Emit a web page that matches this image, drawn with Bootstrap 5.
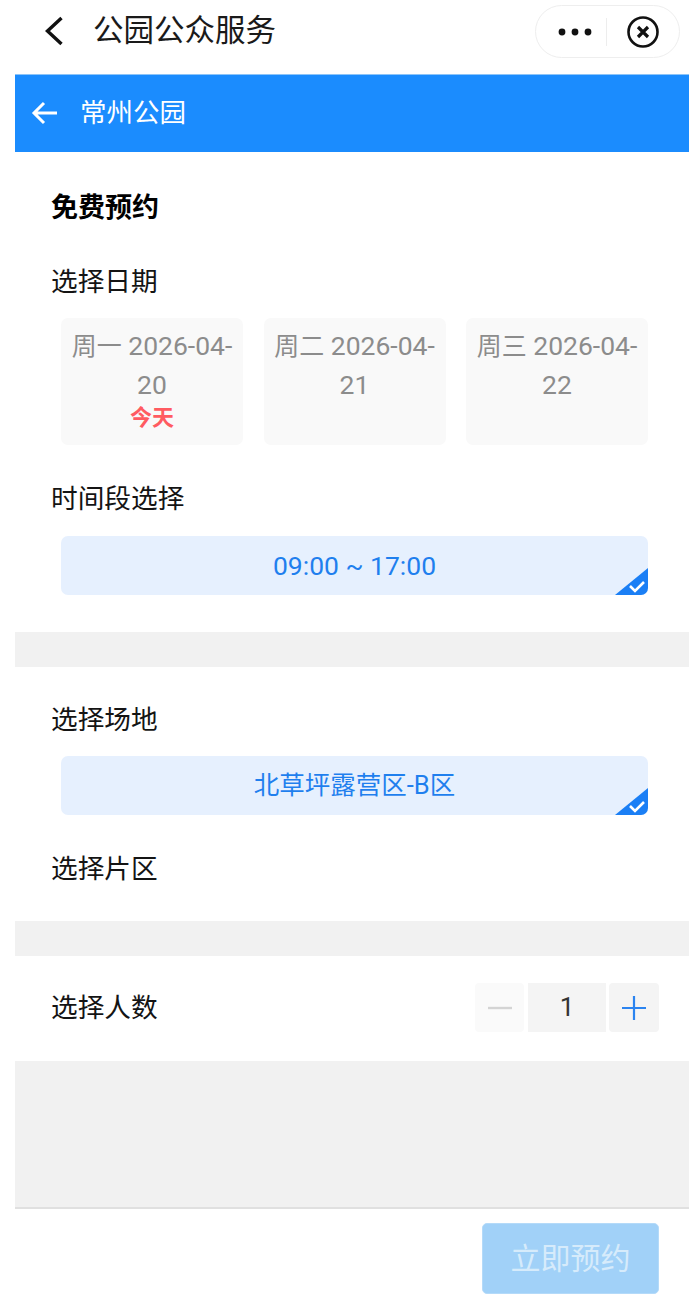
<!DOCTYPE html>
<html lang="zh-CN">
<head>
  <meta charset="UTF-8" />
  <meta name="viewport" content="width=device-width, initial-scale=1.0"/>
  <title>公园公众服务</title>
  <link href="https://cdn.jsdelivr.net/npm/bootstrap@5.3.2/dist/css/bootstrap.min.css" rel="stylesheet">
  <style>
    html, body { height: 1310px; overflow: hidden; }
    body { font-family: Roboto, "Noto Sans CJK SC", sans-serif; color: #111; background: #fff; }
    .wx-bar { height: 74px; }
    .wx-left { height: 62px; }
    .wx-back { width: 93px; padding-left: 44px; }
    .wx-title { font-size: 30.5px; line-height: 1; color: #1a1a1a; }
    .wx-capsule { width: 145px; height: 53px; margin: 5px 9px 0 0; border: 1px solid #eeeeee; border-radius: 27px; padding-left: 22px; }
    .wx-sep { width: 1px; height: 28px; background: #ededed; margin-left: 14px; }
    .wx-close { margin-left: 20px; }
    .page-main { margin-left: 15px; height: 1236px; }
    .top-head { height: 78px; background: #1b8cfe; color: #fff; padding-left: 16px; border-top: 1px solid #8cc4f8; }
    .top-head span { font-size: 26.5px; margin-left: 22px; line-height: 1; }
    .top-head svg { margin-top: -2px; }
    .form-part { padding: 0 41px 0 36px; }
    .part-title { font-size: 27px; font-weight: 700; line-height: 38px; color: #000; padding-top: 37px; }
    .field-label { font-size: 26.7px; line-height: 38px; color: #141414; }
    .label-date { margin-top: 36px; }
    .label-time { margin-top: 35px; }
    .label-place { margin-top: 34px; }
    .label-area { margin-top: 35px; }
    .pick-row { padding-left: 10px; margin-top: 18px; }
    .pick-row.day-row { gap: 20.5px; margin-top: 17px; }
    .pick-row.place-row { margin-top: 17px; }
    .day-item { flex: 1 1 0; height: 127px; background: #f9f9f9; border-radius: 7px; color: #8c8c8c; font-size: 26.5px; line-height: 37.5px; text-align: center; padding: 9px 9px 0; }
    .day-week { font-size: 25px; }
    .day-today { color: #ff5b61; font-size: 22px; font-weight: 700; line-height: 28px; margin-top: 1px; }
    .pick-on { height: 59px; background: #e6f0fe; border-radius: 7px; color: #1f7fee; font-size: 26.5px; overflow: hidden; }
    .pick-text-cjk { font-size: 25.5px; }
    .pick-corner { position: absolute; right: 0; bottom: 0; }
    .gap-band { height: 35px; background: #f1f1f1; }
    .band-one { margin-top: 37px; }
    .band-two { margin-top: 33px; }
    .count-row { height: 105px; padding: 0 30px 2px 36px; }
    .step-btn { width: 49px; height: 49px; border-radius: 4px; }
    .step-minus { background: #fafafa; }
    .step-plus { width: 50px; background: #f4f4f4; margin-left: 3px; }
    .step-num { width: 78px; height: 49px; background: #f4f4f4; margin-left: 4px; font-size: 26px; color: #333; }
    .fill-band { height: 146px; background: #f1f1f1; }
    .foot-bar { border-top: 2px solid #e0e0e0; height: 100px; padding: 14px 30px 0 0; }
    .submit-btn { width: 177px; height: 71px; border-radius: 5px; background: #a1d1f8; color: #d6ebfb; font-size: 30px; border: 1px solid #b4daf9; }
  </style>
</head>
<body>
  <!-- mini program title bar -->
  <div class="wx-bar d-flex align-items-start justify-content-between">
    <div class="wx-left d-flex align-items-center">
      <div class="wx-back d-flex">
        <svg width="20" height="30" viewBox="0 0 20 30"><path d="M17.5 2 L3.5 15 L17.5 28" fill="none" stroke="#111" stroke-width="3.4"/></svg>
      </div>
      <div class="wx-title">公园公众服务</div>
    </div>
    <div class="wx-capsule d-flex align-items-center">
      <svg width="34" height="8" viewBox="0 0 34 8"><circle cx="4" cy="4" r="3.4" fill="#111"/><circle cx="17" cy="4" r="3.4" fill="#111"/><circle cx="30" cy="4" r="3.4" fill="#111"/></svg>
      <div class="wx-sep"></div>
      <svg class="wx-close" width="32" height="32" viewBox="0 0 32 32"><circle cx="16" cy="16" r="14.5" fill="none" stroke="#111" stroke-width="2.6"/><path d="M11 11 L21 21 M21 11 L11 21" fill="none" stroke="#111" stroke-width="3.2"/></svg>
    </div>
  </div>

  <div class="page-main">
    <div class="top-head d-flex align-items-center">
      <svg width="27" height="24" viewBox="0 0 27 24"><path d="M13 2 L3 12 L13 22 M3 12 H26" fill="none" stroke="#fff" stroke-width="3"/></svg>
      <span>常州公园</span>
    </div>

    <div class="form-part">
      <div class="part-title">免费预约</div>
      <div class="field-label label-date">选择日期</div>
      <div class="pick-row day-row d-flex">
        <div class="day-item"><span class="day-week">周一</span> 2026-04-20<div class="day-today">今天</div></div>
        <div class="day-item"><span class="day-week">周二</span> 2026-04-21</div>
        <div class="day-item"><span class="day-week">周三</span> 2026-04-22</div>
      </div>
      <div class="field-label label-time">时间段选择</div>
      <div class="pick-row">
        <div class="pick-on position-relative d-flex align-items-center justify-content-center">09:00 ~ 17:00
          <svg class="pick-corner" width="33" height="27" viewBox="0 0 33 27"><path d="M33 0 V27 H0 Z" fill="#1b7ff5"/><path d="M15 18 L20 23 L29 14" fill="none" stroke="#fff" stroke-width="2.6"/></svg>
        </div>
      </div>
    </div>
    <div class="gap-band band-one"></div>

    <div class="form-part">
      <div class="field-label label-place">选择场地</div>
      <div class="pick-row place-row">
        <div class="pick-on pick-text-cjk position-relative d-flex align-items-center justify-content-center">北草坪露营区-B区
          <svg class="pick-corner" width="33" height="27" viewBox="0 0 33 27"><path d="M33 0 V27 H0 Z" fill="#1b7ff5"/><path d="M15 18 L20 23 L29 14" fill="none" stroke="#fff" stroke-width="2.6"/></svg>
        </div>
      </div>
      <div class="field-label label-area">选择片区</div>
    </div>
    <div class="gap-band band-two"></div>

    <div class="count-row d-flex align-items-center justify-content-between">
      <div class="field-label">选择人数</div>
      <div class="d-flex">
        <div class="step-btn step-minus d-flex align-items-center justify-content-center">
          <svg width="24" height="4" viewBox="0 0 24 4"><path d="M0 2 H24" stroke="#d4d4d4" stroke-width="2.4"/></svg>
        </div>
        <div class="step-num d-flex align-items-center justify-content-center">1</div>
        <div class="step-btn step-plus d-flex align-items-center justify-content-center">
          <svg width="24" height="24" viewBox="0 0 24 24"><path d="M0 12 H24 M12 0 V24" stroke="#2b84f0" stroke-width="2.2"/></svg>
        </div>
      </div>
    </div>
    <div class="fill-band"></div>
    <div class="foot-bar d-flex justify-content-end align-items-start">
      <div class="submit-btn d-flex align-items-center justify-content-center">立即预约</div>
    </div>
  </div>

  <script src="https://cdn.jsdelivr.net/npm/bootstrap@5.3.2/dist/js/bootstrap.bundle.min.js"></script>
</body>
</html>
